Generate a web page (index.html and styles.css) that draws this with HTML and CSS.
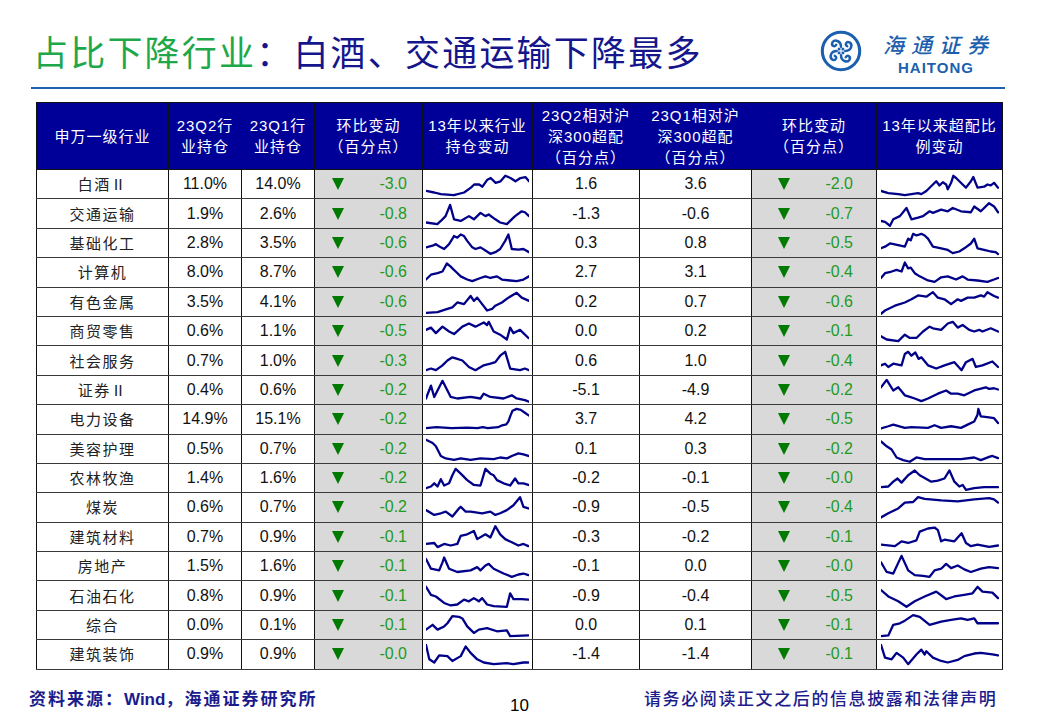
FILE: index.html
```html
<!DOCTYPE html>
<html lang="zh-CN">
<head>
<meta charset="utf-8">
<title>占比下降行业</title>
<link rel="stylesheet" href="styles.css">
</head>
<body>
<div class="top">
  <h1 class="title"><span class="g">占比下降行业</span><span class="b">：白酒、交通运输下降最多</span></h1>
  <div class="brand">
    <svg class="logo" viewBox="0 0 44 44" width="42" height="42">
      <circle cx="22" cy="22" r="19.6" fill="none" stroke="#1b5fae" stroke-width="3.2"/>
      <g fill="none" stroke="#1b5fae" stroke-width="2.6" stroke-linecap="round">
        <path d="M22 17.5 C22 11, 15 9.5, 13 13 C11.5 16.5, 15.5 18.5, 17 15.5"/>
        <path d="M22 17.5 C22 11, 15 9.5, 13 13 C11.5 16.5, 15.5 18.5, 17 15.5" transform="rotate(90 22 22)"/>
        <path d="M22 17.5 C22 11, 15 9.5, 13 13 C11.5 16.5, 15.5 18.5, 17 15.5" transform="rotate(180 22 22)"/>
        <path d="M22 17.5 C22 11, 15 9.5, 13 13 C11.5 16.5, 15.5 18.5, 17 15.5" transform="rotate(270 22 22)"/>
      </g>
      <g fill="#1b5fae">
        <rect x="18.6" y="18.6" width="2.8" height="2.8"/>
        <rect x="22.6" y="18.6" width="2.8" height="2.8"/>
        <rect x="18.6" y="22.6" width="2.8" height="2.8"/>
        <rect x="22.6" y="22.6" width="2.8" height="2.8"/>
      </g>
    </svg>
    <div class="brand-text">
      <div class="brand-cn">海通证券</div>
      <div class="brand-en">HAITONG</div>
    </div>
  </div>
</div>
<div class="rule"></div>

<table class="tbl">
  <colgroup>
    <col class="w1"><col class="w2"><col class="w2"><col class="w4"><col class="w5"><col class="w6"><col class="w7"><col class="w8"><col class="w9">
  </colgroup>
  <thead>
    <tr>
      <th>申万一级行业</th>
      <th>23Q2行<br>业持仓</th>
      <th>23Q1行<br>业持仓</th>
      <th>环比变动<br>（百分点）</th>
      <th>13年以来行业<br>持仓变动</th>
      <th>23Q2相对沪<br>深300超配<br>（百分点）</th>
      <th>23Q1相对沪<br>深300超配<br>（百分点）</th>
      <th>环比变动<br>（百分点）</th>
      <th>13年以来超配比<br>例变动</th>
    </tr>
  </thead>
  <tbody>
    <tr>
      <td class="nm">白酒Ⅱ</td><td>11.0%</td><td>14.0%</td>
      <td class="chg"><div class="c"><span class="tri"></span><span class="val">-3.0</span></div></td>
      <td class="sp"><svg class="spk" viewBox="0 0 100 29" preserveAspectRatio="none"><polyline points="0,21.7 8,23.3 14.4,25 27,26 37,23.3 43.6,18.3 46.8,15 51.6,15 54.8,17.3 59.6,10 62.8,8.3 67.6,13.3 72.4,11.7 77,6 82,8.3 86.9,11.7 91.7,8.3 96.5,7.3 100,11.7"/></svg></td>
      <td>1.6</td><td>3.6</td>
      <td class="chg"><div class="c c2"><span class="tri"></span><span class="val">-2.0</span></div></td>
      <td class="sp sp2"><svg class="spk" viewBox="0 0 100 29" preserveAspectRatio="none"><polyline points="0,21.7 6.2,24 14.6,25 20.2,26 31.4,24 34.2,25 38.4,21.7 44,15 46.8,11.7 49.6,16 52.4,12.7 55.2,15 56.6,20 59.4,13.3 61.3,6 63.6,8.3 69.2,15 72,18.3 76.2,11.7 78.2,7.3 81.8,18.3 87.4,17.3 90.2,15 93,16 95.8,13.3 99.2,18.3"/></svg></td>
    </tr>
    <tr>
      <td class="nm">交通运输</td><td>1.9%</td><td>2.6%</td>
      <td class="chg"><div class="c"><span class="tri"></span><span class="val">-0.8</span></div></td>
      <td class="sp"><svg class="spk" viewBox="0 0 100 29" preserveAspectRatio="none"><polyline points="0,23.3 11,25 14.4,21.7 19,16.7 23.4,5 27.2,20 33.7,21.7 41.7,16.7 46.5,20 52.9,13.3 57.7,16.7 60.9,15 67.3,20 72,23.3 78.5,25 81.7,21.7 86.5,16.7 92.9,11.7 96,12.7 100,16.7"/></svg></td>
      <td>-1.3</td><td>-0.6</td>
      <td class="chg"><div class="c c2"><span class="tri"></span><span class="val">-0.7</span></div></td>
      <td class="sp sp2"><svg class="spk" viewBox="0 0 100 29" preserveAspectRatio="none"><polyline points="0,21.7 3.4,22.7 7.6,26.7 10.4,20 16,16.7 21.6,8.3 25.8,20 31.4,18.3 35.6,16.7 41.2,11.7 44,13.3 51,10 56.6,11.7 60.8,8.3 67.8,11.7 76.2,12.7 79,6.7 84.6,11.7 91.6,3.3 95.8,6.7 99.2,12.7"/></svg></td>
    </tr>
    <tr>
      <td class="nm">基础化工</td><td>2.8%</td><td>3.5%</td>
      <td class="chg"><div class="c"><span class="tri"></span><span class="val">-0.6</span></div></td>
      <td class="sp"><svg class="spk" viewBox="0 0 100 29" preserveAspectRatio="none"><polyline points="0,19 6.4,17.3 9.6,15.7 14.4,19 17.6,20.7 22.4,15.7 27.2,7.3 30.4,9 33.7,5.7 36.9,7.3 40,12.3 44.9,19 48,20.7 52.9,19 57.7,22.3 62.5,25.7 67.3,24 72,20.7 76.9,12.3 80,5.7 83.3,20.7 89.7,21.3 94.6,20.7 100,24"/></svg></td>
      <td>0.3</td><td>0.8</td>
      <td class="chg"><div class="c c2"><span class="tri"></span><span class="val">-0.5</span></div></td>
      <td class="sp sp2"><svg class="spk" viewBox="0 0 100 29" preserveAspectRatio="none"><polyline points="0,20 3.4,18.3 7.6,15 14.6,16.7 20.2,18.3 23,10 25.2,11.7 27.2,5 30,6.7 34.2,5 37,6.7 39.8,10 44,18.3 51,20 56.6,21.7 60.8,25 66.4,23.3 70.6,20 76.2,15 79,10 81.8,20 87.4,21.7 93,23.3 97.2,24 99.2,26"/></svg></td>
    </tr>
    <tr>
      <td class="nm">计算机</td><td>8.0%</td><td>8.7%</td>
      <td class="chg"><div class="c"><span class="tri"></span><span class="val">-0.6</span></div></td>
      <td class="sp"><svg class="spk" viewBox="0 0 100 29" preserveAspectRatio="none"><polyline points="0,22.3 4.8,17.3 11.2,15.7 16,14 20.2,5.7 24,9 25.6,10.7 28.8,14 33.7,19 40,22.3 44.9,24 52.9,20.7 57.7,19 62.5,20.7 68.9,19 73.7,22.3 81.7,23.3 88,24 94.6,22.3 100,19"/></svg></td>
      <td>2.7</td><td>3.1</td>
      <td class="chg"><div class="c c2"><span class="tri"></span><span class="val">-0.4</span></div></td>
      <td class="sp sp2"><svg class="spk" viewBox="0 0 100 29" preserveAspectRatio="none"><polyline points="0,20.7 3.4,15.7 9,14 13.2,12.3 17.4,14 20.2,4.7 23,10.7 25.2,10 28.6,15.7 32.8,19 39.8,23.3 45.4,24.7 51,20 56.6,19 63.6,22.3 69.2,19 73.4,22.3 81.8,23.3 90.2,24.7 95.8,22.3 99.2,20.7"/></svg></td>
    </tr>
    <tr>
      <td class="nm">有色金属</td><td>3.5%</td><td>4.1%</td>
      <td class="chg"><div class="c"><span class="tri"></span><span class="val">-0.6</span></div></td>
      <td class="sp"><svg class="spk" viewBox="0 0 100 29" preserveAspectRatio="none"><polyline points="0,25.7 11.2,25 20.8,21.7 25.6,20 30.4,15 36.9,16.7 43.3,8.3 46.5,13.3 49.7,10 54.5,16.7 59.3,23.3 64.1,21.7 67.3,18.3 73.7,15 80,10 88,5 92.9,10 100,13.3"/></svg></td>
      <td>0.2</td><td>0.7</td>
      <td class="chg"><div class="c c2"><span class="tri"></span><span class="val">-0.6</span></div></td>
      <td class="sp sp2"><svg class="spk" viewBox="0 0 100 29" preserveAspectRatio="none"><polyline points="0,26.7 3.4,23.3 11.8,18.3 20.2,15 25.8,11.7 31.4,7.7 38.4,9 44,4.3 48.2,10 53.8,11.7 59.4,16.7 65,11.7 67.8,13.3 73.4,10 79,10 84.6,7.7 87.4,9 90.2,4.3 95.8,8.3 99.2,10"/></svg></td>
    </tr>
    <tr>
      <td class="nm">商贸零售</td><td>0.6%</td><td>1.1%</td>
      <td class="chg"><div class="c"><span class="tri"></span><span class="val">-0.5</span></div></td>
      <td class="sp"><svg class="spk" viewBox="0 0 100 29" preserveAspectRatio="none"><polyline points="0,13.3 4.8,11 9.6,16.7 16,10 22.4,15 27.2,17.7 35.3,10 41.7,6.7 48,10 56.1,5.7 59.3,8.3 60.9,5 65.7,15 72,18.3 78.5,23.3 81.7,11 84.9,16.7 91.3,13.3 99.4,21.7"/></svg></td>
      <td>0.0</td><td>0.2</td>
      <td class="chg"><div class="c c2"><span class="tri"></span><span class="val">-0.1</span></div></td>
      <td class="sp sp2"><svg class="spk" viewBox="0 0 100 29" preserveAspectRatio="none"><polyline points="0,20 4.8,23.3 14.6,25 20.2,18.3 24.4,21.7 30,21.7 35.6,15 41.2,10 44,11.7 51,13.3 56.6,6.7 60.8,5 65,11 69.2,8.3 74.8,13.3 79,15 83.2,13.3 86,15 93,11.7 99.2,15"/></svg></td>
    </tr>
    <tr>
      <td class="nm">社会服务</td><td>0.7%</td><td>1.0%</td>
      <td class="chg"><div class="c"><span class="tri"></span><span class="val">-0.3</span></div></td>
      <td class="sp"><svg class="spk" viewBox="0 0 100 29" preserveAspectRatio="none"><polyline points="0,24 4.8,22.3 9.6,24 16,19 20.8,14 25.6,10.7 30.4,12.3 35.3,14 41.7,20.7 48,24 56,19 62.5,17.3 67.3,15.7 72,9 76.9,5 81.7,22.3 91.3,24 96,22.3 100,24"/></svg></td>
      <td>0.6</td><td>1.0</td>
      <td class="chg"><div class="c c2"><span class="tri"></span><span class="val">-0.4</span></div></td>
      <td class="sp sp2"><svg class="spk" viewBox="0 0 100 29" preserveAspectRatio="none"><polyline points="0,19 3.4,17.3 6.2,20.7 10.4,17.3 17.4,19 20.2,7.3 23,5 25.8,9 29.1,5.7 31.9,12.3 34.2,10.7 39.8,19 46.8,22.3 53.8,19 62.2,15.7 68.3,24 72,15.7 77.6,12.3 80.4,20.7 86,19 94.4,15 99.2,20.7"/></svg></td>
    </tr>
    <tr>
      <td class="nm">证券Ⅱ</td><td>0.4%</td><td>0.6%</td>
      <td class="chg"><div class="c"><span class="tri"></span><span class="val">-0.2</span></div></td>
      <td class="sp"><svg class="spk" viewBox="0 0 100 29" preserveAspectRatio="none"><polyline points="0,23.3 4.8,10 8,21.7 16,5 24,21.7 30.4,23.3 43.3,21.7 52.9,23.3 56,18.3 62.5,21.7 75.3,23.3 83.3,20 88,23.3 96,25 100,26.7"/></svg></td>
      <td>-5.1</td><td>-4.9</td>
      <td class="chg"><div class="c c2"><span class="tri"></span><span class="val">-0.2</span></div></td>
      <td class="sp sp2"><svg class="spk" viewBox="0 0 100 29" preserveAspectRatio="none"><polyline points="0,11.7 4.8,4 10.4,15 14.6,11.7 20.2,20 24.4,21.7 28.6,23.3 34.2,26 39.8,23.3 48.2,18.3 55.2,15 59.4,18.3 65,18.3 70.6,20 79,15 88.8,11.7 91.6,13.3 95.8,12.7 99.2,14"/></svg></td>
    </tr>
    <tr>
      <td class="nm">电力设备</td><td>14.9%</td><td>15.1%</td>
      <td class="chg"><div class="c"><span class="tri"></span><span class="val">-0.2</span></div></td>
      <td class="sp"><svg class="spk" viewBox="0 0 100 29" preserveAspectRatio="none"><polyline points="0,24 10,23 25,24 40,23.5 50,24 55,23 60,24 70,23 74,21 78,20 80,17 82,11 84,6 88,4 92,5 96,8 100,11"/></svg></td>
      <td>3.7</td><td>4.2</td>
      <td class="chg"><div class="c c2"><span class="tri"></span><span class="val">-0.5</span></div></td>
      <td class="sp sp2"><svg class="spk" viewBox="0 0 100 29" preserveAspectRatio="none"><polyline points="0,24.3 6.2,22 10.4,20.3 20.2,23.7 25.8,23 39.8,23.7 45.4,21 51,23.7 59.4,22 67.8,23.7 73.4,20.3 79,17 81.8,10 82.5,4 84.6,11.7 90,12.5 95.8,13.7 99.2,18.7"/></svg></td>
    </tr>
    <tr>
      <td class="nm">美容护理</td><td>0.5%</td><td>0.7%</td>
      <td class="chg"><div class="c"><span class="tri"></span><span class="val">-0.2</span></div></td>
      <td class="sp"><svg class="spk" viewBox="0 0 100 29" preserveAspectRatio="none"><polyline points="0,5 6.4,8.3 9.6,11.7 11.2,15 14.4,21.7 19.2,24.3 27.2,25.7 33.7,24.3 43.3,25.7 52.9,24.3 65.7,25 72,23.3 78.5,24.3 83.3,21.7 89.7,19 94.6,20 99.4,21.7"/></svg></td>
      <td>0.1</td><td>0.3</td>
      <td class="chg"><div class="c c2"><span class="tri"></span><span class="val">-0.2</span></div></td>
      <td class="sp sp2"><svg class="spk" viewBox="0 0 100 29" preserveAspectRatio="none"><polyline points="0,6.7 4.8,11.7 9,15 13.2,23.3 18.8,26 24.4,27.7 30,23.3 37,25 51,25 67.8,25 79,23.3 84.6,26 91.6,22.7 94.4,21.7 99.2,24"/></svg></td>
    </tr>
    <tr>
      <td class="nm">农林牧渔</td><td>1.4%</td><td>1.6%</td>
      <td class="chg"><div class="c"><span class="tri"></span><span class="val">-0.2</span></div></td>
      <td class="sp"><svg class="spk" viewBox="0 0 100 29" preserveAspectRatio="none"><polyline points="0,25 4.8,23.3 8,20 11.2,23.3 14.4,15.7 17.6,22.3 22.4,20 25.6,11.7 28.8,5 33.7,10 40,16.7 46.5,21.7 52.9,22.3 57.7,5 62.5,10 65.7,11.7 68.9,16.7 75.3,20 81.7,22.3 86.5,15 89.7,20 94.6,20 99.4,21.7"/></svg></td>
      <td>-0.2</td><td>-0.1</td>
      <td class="chg"><div class="c c2"><span class="tri"></span><span class="val">-0.0</span></div></td>
      <td class="sp sp2"><svg class="spk" viewBox="0 0 100 29" preserveAspectRatio="none"><polyline points="0,24 6.2,23.3 10.4,18.3 14,15 17.4,19.3 23,11.7 28.6,6.7 32.8,11.7 42.6,18.3 48.2,17.3 53.8,15 58,6.7 62.2,18.3 66.4,23.3 69.2,21.7 72,26.7 79,25 87.4,24 99.2,24"/></svg></td>
    </tr>
    <tr>
      <td class="nm">煤炭</td><td>0.6%</td><td>0.7%</td>
      <td class="chg"><div class="c"><span class="tri"></span><span class="val">-0.2</span></div></td>
      <td class="sp"><svg class="spk" viewBox="0 0 100 29" preserveAspectRatio="none"><polyline points="0,17.7 8,22.7 14.4,21 19.2,19.3 25.6,24.3 32,16 33.7,14.3 38.5,19.3 43.3,19.3 54.5,21 62.5,19.3 67.3,22.7 72,21 78.5,17.7 84.9,12.7 91.3,4.3 94.6,14.3 99.4,16"/></svg></td>
      <td>-0.9</td><td>-0.5</td>
      <td class="chg"><div class="c c2"><span class="tri"></span><span class="val">-0.4</span></div></td>
      <td class="sp sp2"><svg class="spk" viewBox="0 0 100 29" preserveAspectRatio="none"><polyline points="0,25.3 6.2,21 14.6,16 20.2,10 27.2,9.3 31.4,4.3 37,6 51,7.7 65,8.7 79,6.7 91.6,5.3 95.8,6.7 99.2,10"/></svg></td>
    </tr>
    <tr>
      <td class="nm">建筑材料</td><td>0.7%</td><td>0.9%</td>
      <td class="chg"><div class="c"><span class="tri"></span><span class="val">-0.1</span></div></td>
      <td class="sp"><svg class="spk" viewBox="0 0 100 29" preserveAspectRatio="none"><polyline points="0,21.7 8,20.7 11.2,25 17.6,21.7 24,23.3 30.4,21.7 33.7,13.3 40,11.7 46.5,8.3 49.7,16.7 57.7,11.7 62.5,15 67.3,3.3 72,11.7 76.9,16.7 83.3,20 89.7,23.3 94.6,21.7 99.4,24"/></svg></td>
      <td>-0.3</td><td>-0.2</td>
      <td class="chg"><div class="c c2"><span class="tri"></span><span class="val">-0.1</span></div></td>
      <td class="sp sp2"><svg class="spk" viewBox="0 0 100 29" preserveAspectRatio="none"><polyline points="0,22.3 11.8,24 17.4,19 23,20.7 30,18 32.8,9 39.8,5.7 45.4,4.7 48.2,7.3 51,19 53.8,17.3 62.2,19 68.3,10.7 72,20.7 76.2,24 81.8,22.3 91.6,24.7 99.2,23.3"/></svg></td>
    </tr>
    <tr>
      <td class="nm">房地产</td><td>1.5%</td><td>1.6%</td>
      <td class="chg"><div class="c"><span class="tri"></span><span class="val">-0.1</span></div></td>
      <td class="sp"><svg class="spk" viewBox="0 0 100 29" preserveAspectRatio="none"><polyline points="0,7.3 4.8,17.3 12.8,19 16,10.7 17.6,5.7 22.4,17.3 30.4,20.7 43.3,19 49.7,15.7 52.9,19 57.7,14 60.9,12.3 65.7,17.3 75.3,22.3 83.3,25.7 89.7,23.3 94.6,22.3 99.4,24"/></svg></td>
      <td>-0.1</td><td>0.0</td>
      <td class="chg"><div class="c c2"><span class="tri"></span><span class="val">-0.0</span></div></td>
      <td class="sp sp2"><svg class="spk" viewBox="0 0 100 29" preserveAspectRatio="none"><polyline points="0,10.7 4.8,20.7 10.4,22.3 17.4,4 23,19 28.6,24 35.6,24.7 41.2,25.7 45.4,19 51,17.3 55.2,12.3 59.4,16.7 65,14 70.6,18 76.2,20.7 84.6,17.3 91.6,15.7 99.2,16.7"/></svg></td>
    </tr>
    <tr>
      <td class="nm">石油石化</td><td>0.8%</td><td>0.9%</td>
      <td class="chg"><div class="c"><span class="tri"></span><span class="val">-0.1</span></div></td>
      <td class="sp"><svg class="spk" viewBox="0 0 100 29" preserveAspectRatio="none"><polyline points="0,5 4.8,13.3 9.6,15 17.6,21.7 24,24.3 30.4,23.3 36.9,18.3 41.7,20 46.5,16.7 51.3,20 54.5,16.7 59.3,23.3 65.7,25 78.5,25.7 81.7,11.7 84.9,17.7 92.9,17.7 99.4,18.3"/></svg></td>
      <td>-0.9</td><td>-0.4</td>
      <td class="chg"><div class="c c2"><span class="tri"></span><span class="val">-0.5</span></div></td>
      <td class="sp sp2"><svg class="spk" viewBox="0 0 100 29" preserveAspectRatio="none"><polyline points="0,8.3 6.2,15 14.6,20 21.6,25.7 28.6,20 37,15 46.8,10 52.4,15 55.2,17.7 62.2,15 70.6,13.3 77.6,11.7 81.8,5 86,10 94.4,11 99.2,16.7"/></svg></td>
    </tr>
    <tr>
      <td class="nm">综合</td><td>0.0%</td><td>0.1%</td>
      <td class="chg"><div class="c"><span class="tri"></span><span class="val">-0.1</span></div></td>
      <td class="sp"><svg class="spk" viewBox="0 0 100 29" preserveAspectRatio="none"><polyline points="0,19.3 6.4,14.3 11.2,19.3 17.6,16 20.8,12.7 25.6,5.3 32,6 35.3,7.7 40,16 46.5,22.7 51.3,19.3 59.3,17.7 68.9,21 78.5,20 81.7,26 99.4,25.3"/></svg></td>
      <td>0.0</td><td>0.1</td>
      <td class="chg"><div class="c c2"><span class="tri"></span><span class="val">-0.1</span></div></td>
      <td class="sp sp2"><svg class="spk" viewBox="0 0 100 29" preserveAspectRatio="none"><polyline points="0,26 6.2,25.3 10.4,14.3 16,12.7 20.2,10 27.2,4.3 32.8,6 41.2,14.3 51,11 59.4,9.3 67.8,7.7 73.4,9.3 79,7.7 81.8,12.7 99.2,12.7"/></svg></td>
    </tr>
    <tr>
      <td class="nm">建筑装饰</td><td>0.9%</td><td>0.9%</td>
      <td class="chg"><div class="c"><span class="tri"></span><span class="val">-0.0</span></div></td>
      <td class="sp"><svg class="spk" viewBox="0 0 100 29" preserveAspectRatio="none"><polyline points="0,5 3.2,20 8,23.3 12.8,16 20.8,16.7 25.6,21.7 33.7,16.7 38.5,6.7 43.3,13.3 49.7,20 56.1,23.3 65.7,25 78.5,24 84.9,25 94.6,23.3 99.4,23.3"/></svg></td>
      <td>-1.4</td><td>-1.4</td>
      <td class="chg"><div class="c c2"><span class="tri"></span><span class="val">-0.1</span></div></td>
      <td class="sp sp2"><svg class="spk" viewBox="0 0 100 29" preserveAspectRatio="none"><polyline points="0,5 3.4,18.3 9,20 13.2,13.3 18.8,18.3 23,25 30,15 34.2,10 37,15 38.4,11.7 44,18.3 51,21.7 56.6,23.3 65,20.7 70.6,16.7 79,14 84.6,13.3 94.4,15 99.2,16"/></svg></td>
    </tr>
  </tbody>
</table>

<div class="foot">
  <div class="src">资料来源：<span class="w">Wind</span>，海通证券研究所</div>
  <div class="pg">10</div>
  <div class="note">请务必阅读正文之后的信息披露和法律声明</div>
</div>
</body>
</html>
```

FILE: styles.css
```css
* { box-sizing: border-box; }
html, body { margin: 0; padding: 0; }
body {
  width: 1040px;
  height: 718px;
  overflow: hidden;
  background: #fff;
  font-family: "Liberation Sans", "Noto Sans CJK SC", sans-serif;
}

.top {
  display: flex;
  justify-content: space-between;
  align-items: flex-start;
  height: 87px;
  padding: 30px 45px 0 33px;
}
.title {
  margin: 0;
  font-family: "Noto Sans CJK SC", sans-serif;
  font-weight: 400;
  font-size: 35px;
  line-height: 42px;
  letter-spacing: 2.2px;
}
.title .g { color: #1fa84a; }
.title .b { color: #15158c; }

.brand {
  display: flex;
  align-items: flex-start;
  gap: 21px;
}
.logo { display: block; width: 42px; height: 42px; margin-left: -2px; }
.brand-text { padding-top: 3px; }
.brand-cn {
  font-family: "Noto Sans CJK SC", sans-serif;
  font-size: 21px;
  line-height: 22px;
  letter-spacing: 7px;
  font-weight: 500;
  font-style: italic;
  color: #1b5fae;
}
.brand-en {
  font-family: "Liberation Sans", sans-serif;
  font-weight: 700;
  font-size: 15px;
  line-height: 13px;
  letter-spacing: 1px;
  color: #1b5fae;
  margin-left: 15px;
  margin-top: 6px;
}

.rule {
  height: 2px;
  background: #1f5fb0;
  margin: 0 35px 0 31px;
}

.tbl {
  border-collapse: collapse;
  table-layout: fixed;
  width: 966px;
  margin: 13px 0 0 36px;
}
.w1 { width: 132px; }
.w2 { width: 73px; }
.w4 { width: 108px; }
.w5 { width: 110px; }
.w6 { width: 107px; }
.w7 { width: 112px; }
.w8 { width: 125px; }
.w9 { width: 126px; }

.tbl th {
  height: 67px;
  padding: 0;
  background: #000099;
  color: #fff;
  font-family: "Liberation Sans", "Noto Sans CJK SC", sans-serif;
  font-weight: 400;
  font-size: 15px;
  line-height: 21px;
  letter-spacing: 1px;
  border: 1px solid #111;
  text-align: center;
  vertical-align: middle;
}
.tbl td {
  height: 29.4px;
  padding: 0;
  border-left: 1px solid #111;
  border-right: 1px solid #111;
  border-top: 1px solid #3a3a3a;
  border-bottom: 1px solid #3a3a3a;
  text-align: center;
  vertical-align: middle;
  font-size: 16px;
  color: #111;
  line-height: 20px;
}
.tbl td.nm {
  font-family: "Noto Sans CJK SC", sans-serif;
  font-size: 15px;
  letter-spacing: 1.5px;
  color: #222;
}
.tbl td.chg { background: #d9d9d9; }
.c {
  display: flex;
  justify-content: space-between;
  align-items: center;
  padding: 0 15px 0 17px;
}
.c2 { padding: 0 23px 0 26px; }
.tri {
  width: 0;
  height: 0;
  border-left: 6.5px solid transparent;
  border-right: 6.5px solid transparent;
  border-top: 12px solid #007a00;
}
.val { color: #1f9a1f; }

.tbl td.sp { padding: 0 3px 0 3px; }
.tbl td.sp2 { padding: 0 3px 0 4px; }
.spk { display: block; width: 100%; height: 28px; }
.spk polyline {
  fill: none;
  stroke: #000088;
  stroke-width: 2.3;
  stroke-linejoin: round;
  stroke-linecap: round;
  vector-effect: non-scaling-stroke;
}

.foot {
  display: grid;
  grid-template-columns: 481px 134px auto;
  padding-left: 29px;
  margin-top: 16px;
  color: #1c1c8c;
  font-family: "Noto Sans CJK SC", sans-serif;
  font-size: 17px;
  line-height: 24px;
}
.src { letter-spacing: 2px; font-weight: 700; }
.src .w { font-family: "Liberation Sans", sans-serif; font-weight: 700; letter-spacing: 0; }
.pg {
  font-family: "Liberation Sans", sans-serif;
  color: #000;
  font-size: 17px;
  margin-top: 8px;
}
.note { letter-spacing: 1.6px; font-weight: 500; }
```
